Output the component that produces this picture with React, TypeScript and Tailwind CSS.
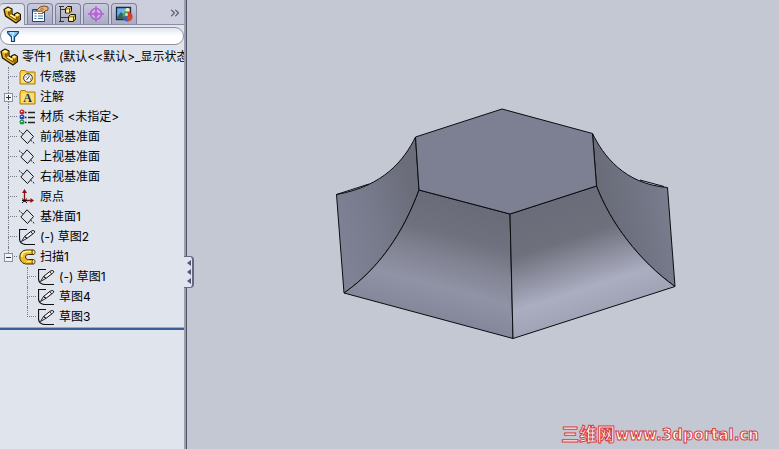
import { Fragment, ReactNode } from "react";
import { ChevronsRight } from "lucide-react";

const PartIcon = () => (
    <svg width="18" height="18" viewBox="0 0 18 18" className="shrink-0">
        <path d="M1 3.500 5 1l4 2v5l2.500 1.500V8L14.500 6.500 17.500 8.500v5l-4.500 3.500L2.500 10z" fill="#e3b11c" stroke="#1f1500" strokeWidth="1.200" strokeLinejoin="round" />
        <path d="M2.200 3.800 5 2l3 1.400L5.500 5.300zM12.300 8.500l2.300-1.100 2 1.400-2.500 1.700zM6 9.500l2.500-1 5 3-1 1.500z" fill="#fff0a0" />
        <path d="M5.600 6 8.300 4v4L6 9.200zM13.800 11.200l3-2.200v4.200l-3.300 2.500z" fill="#a06c06" />
        <path d="M5.500 5.500 6 9.500l7 4.500.5-3.200" fill="none" stroke="#4b3200" strokeWidth=".8" />
    </svg>
);

const PropertyIcon = () => (
    <svg width="18" height="18" viewBox="0 0 18 18">
        <path d="M1.500 4.500h12v12h-12z" fill="#fff" stroke="#27415f" />
        <path d="M2 5h5v2H2z" fill="#4d9be0" />
        <path d="M3.500 8.500h2M7 8.500h5M3.500 11h2M7 11h5M3.500 13.500h2M7 13.500h5" stroke="#3c76ac" />
        <path d="M5.500 5.500 9 2l4-1 4 1v3l-3 1-2 2-1.500-2L8 6.500z" fill="#e9b77e" stroke="#714216" strokeWidth=".9" />
        <path d="M9 4.500 12 3M10 6l3-2" stroke="#8b5524" strokeWidth=".7" />
    </svg>
);

const ConfigIcon = () => (
    <svg width="18" height="18" viewBox="0 0 18 18">
        <path d="M1.500 1v16M2 4.500h5M2 12.500h7" stroke="#333" fill="none" />
        <path d="M0 1.500h5M0 16.500h5" stroke="#333" />
        <path d="M6.500 3.500 8.500 1.500h4v4.500l-2 2h-4zM9.500 11.500l2-2h5V14l-2 2.500h-5z" fill="#f0d060" stroke="#1d1700" />
        <path d="M7 4h3.500v3.500M10.500 4l2-2M10 12h4.500v4M14.500 12l2-2" fill="none" stroke="#382b00" strokeWidth=".8" />
        <path d="M7.500 4.500h2.500v3H7.500zM10.500 12.500H14v3h-3.500z" fill="#fff3a8" />
    </svg>
);

const TargetIcon = () => (
    <svg width="18" height="18" viewBox="0 0 18 18" fill="none" stroke="#b95fd6" strokeWidth="1.500">
        <circle cx="9" cy="9" r="5.500" />
        <circle cx="9" cy="9" r="2" strokeWidth="1" />
        <path d="M9 1v16M1 9h16" />
    </svg>
);

const AppearanceIcon = () => (
    <svg width="18" height="18" viewBox="0 0 18 18">
        <path d="M1.500 2.500h14v12h-14z" fill="#69b1ed" stroke="#1a2c49" strokeWidth="1.300" />
        <path d="M2 12 6 7l7 7H2z" fill="#2f6a58" />
        <circle cx="12.500" cy="5" r="2" fill="#fff6a3" />
        <circle cx="12.500" cy="11.500" r="5" fill="#d83a28" />
        <path d="M12.500 11.500V6.500a5 5 0 0 0-4.900 5z" fill="#43ae50" />
        <path d="M12.500 11.500H7.600a5 5 0 0 0 4.900 5z" fill="#3263c7" />
        <path d="M12.500 11.500v5a5 5 0 0 0 4.900-5z" fill="#d04a30" />
        <circle cx="11.500" cy="9.500" r="1.500" fill="#fff" opacity=".7" />
    </svg>
);

const FunnelIcon = () => (
    <svg width="12" height="13" viewBox="0 0 12 13" className="shrink-0">
        <path d="M.7 1.500h10.600v1.600L7.500 7v4.500h-3V7L.7 3.100z" fill="#7cc7f2" stroke="#123f80" strokeWidth="1.200" />
        <path d="M3 3h4L5.500 5.500v5" fill="none" stroke="#e6f8ff" />
    </svg>
);

const Folder = ({ children }: { children: ReactNode }) => (
    <svg width="17" height="16" viewBox="0 0 17 16">
        <path d="M1 3.500 2 1.500h4.500l1 1.500H16v12H1z" fill="#f7cf42" stroke="#b07d0c" />
        <path d="M2 4.500h13v9.500H2z" fill="#fbdf70" />
        {children}
    </svg>
);

const SensorIcon = () => (
    <Folder>
        <circle cx="9" cy="9" r="4.300" fill="#fff" stroke="#333" />
        <path d="M7.500 11 11 6.500M6.500 8h1M9 5.500v1M11 10h1" stroke="#333" />
    </Folder>
);

const NoteIcon = () => (
    <Folder>
        <text x="8.500" y="13" textAnchor="middle" fontFamily="Liberation Serif, serif" fontSize="12" fontWeight="700" fill="#1c2d57">A</text>
    </Folder>
);

const MaterialIcon = () => (
    <svg width="17" height="16" viewBox="0 0 17 16">
        <circle cx="3" cy="3" r="2.500" fill="#c92a2a" />
        <circle cx="3" cy="8" r="2.500" fill="#2547c0" />
        <circle cx="3" cy="13" r="2.500" fill="#1f9a40" />
        <path d="M2 2h1.500v1H2zM2 7h1.500v1H2zM2 12h1.500v1H2z" fill="#fff" />
        <path d="M6 3.500h1.500M9 3.500h7M6 8.500h1.500M9 8.500h7M6 13.500h1.500M9 13.500h7" stroke="#222" strokeWidth="1.600" />
    </svg>
);

const PlaneIcon = () => (
    <svg width="17" height="16" viewBox="0 0 17 16" fill="none" stroke="#111">
        <path d="M8 .8 14.500 7.500 8.500 14.500 1.800 8z" />
        <path d="M0 1.500 4.500 5.500M11.500 11l4.500 4" strokeDasharray="2 1" />
    </svg>
);

const OriginIcon = () => (
    <svg width="17" height="16" viewBox="0 0 17 16" fill="none" stroke="#8c1212">
        <path d="M5.500 13V2M7 11.500h6" strokeWidth="1.300" />
        <path d="M5.500 0 8 4H3zM15 11.500 11.500 9v5z" fill="#8c1212" stroke="none" />
        <path d="M3 9.500l5 4.500M3 14l5-4.500M3 11.500h5" stroke="#111" />
    </svg>
);

const SketchIcon = () => (
    <svg width="17" height="16" viewBox="0 0 17 16" fill="none" stroke="#111">
        <path d="M8 .5H.5V10Q1 15 6.500 15.500H16" strokeWidth="1.200" />
        <path d="M5.500 7.500 12 2.300Q14.500.8 15.500 2t-1.200 2.500L8 9.300z" fill="#f2f3f7" />
        <path d="M2.500 12.500 5.500 7.500 8 9.300zM12 3l1.800 2" strokeWidth=".9" />
    </svg>
);

const SweepIcon = () => (
    <svg width="17" height="16" viewBox="0 0 17 16">
        <path d="M14.500 1H8C3.500 1 .8 4 .8 8s2.700 7 7.200 7h6.500v-4.500H9.500C7.500 10.500 6.500 9.500 6.500 8S7.500 5.500 9.500 5.500h5z" fill="#edbb24" stroke="#3b2900" />
        <path d="M12 2.500H8C4.500 2.500 2.700 5 2.700 8" fill="none" stroke="#fff1a0" strokeWidth="1.500" />
        <path d="M8 12.500h5" stroke="#fff1a0" />
        <ellipse cx="14.500" cy="3.300" rx="1.500" ry="2.200" fill="#ffe36a" stroke="#3b2900" strokeWidth=".8" />
        <ellipse cx="14.500" cy="12.700" rx="1.500" ry="2.200" fill="#ffe36a" stroke="#3b2900" strokeWidth=".8" />
    </svg>
);

const tabs = [
    { name: "FeatureManager", icon: <PartIcon /> },
    { name: "PropertyManager", icon: <PropertyIcon /> },
    { name: "ConfigurationManager", icon: <ConfigIcon /> },
    { name: "DimXpertManager", icon: <TargetIcon /> },
    { name: "DisplayManager", icon: <AppearanceIcon /> },
];

type Item = { label: string; icon: ReactNode; toggle?: "plus" | "minus"; children?: Item[] };

const items: Item[] = [
    { label: "传感器", icon: <SensorIcon /> },
    { label: "注解", icon: <NoteIcon />, toggle: "plus" },
    { label: "材质 <未指定>", icon: <MaterialIcon /> },
    { label: "前视基准面", icon: <PlaneIcon /> },
    { label: "上视基准面", icon: <PlaneIcon /> },
    { label: "右视基准面", icon: <PlaneIcon /> },
    { label: "原点", icon: <OriginIcon /> },
    { label: "基准面1", icon: <PlaneIcon /> },
    { label: "(-) 草图2", icon: <SketchIcon /> },
    {
        label: "扫描1",
        icon: <SweepIcon />,
        toggle: "minus",
        children: [
            { label: "(-) 草图1", icon: <SketchIcon /> },
            { label: "草图4", icon: <SketchIcon /> },
            { label: "草图3", icon: <SketchIcon /> },
        ],
    },
];

function Tree({ items }: { items: Item[] }) {
    return (
        <ul>
            {items.map((item, index) => (
                <Fragment key={item.label}>
                    <li className="relative flex h-5 items-center">
                        <span className="ml-2 flex w-[11px] shrink-0 flex-col">
                            <span className="h-[10px] w-[9px] border-b border-l border-dotted border-[#777b88]" />
                            <span className={index < items.length - 1 ? "h-[10px] border-l border-dotted border-[#777b88]" : "h-[10px]"} />
                        </span>
                        {item.toggle && (
                            <button
                                aria-label={item.label}
                                className="absolute left-1 flex size-[9px] items-center justify-center border border-[#8c909c] bg-[#f4f5f9]"
                            >
                                <svg width="5" height="5" viewBox="0 0 5 5" stroke="#333">
                                    <path d={item.toggle === "plus" ? "M0 2.500h5M2.500 0v5" : "M0 2.500h5"} />
                                </svg>
                            </button>
                        )}
                        {item.icon}
                        <span className="ml-1 whitespace-nowrap">{item.label}</span>
                    </li>
                    {item.children && (
                        <li className="pl-[19px]">
                            <Tree items={item.children} />
                        </li>
                    )}
                </Fragment>
            ))}
        </ul>
    );
}

function Model() {
    return (
        <svg viewBox="187 0 592 449" className="h-full w-full" role="img" aria-label="扫描1">
            <defs>
                <linearGradient id="left" gradientUnits="userSpaceOnUse" x1="338" y1="240" x2="419" y2="215">
                    <stop offset="0" stopColor="#7f8295" />
                    <stop offset=".5" stopColor="#777a8b" />
                    <stop offset="1" stopColor="#6b6d7b" />
                </linearGradient>
                <linearGradient id="right" gradientUnits="userSpaceOnUse" x1="595" y1="205" x2="672" y2="190">
                    <stop offset="0" stopColor="#686a76" />
                    <stop offset=".5" stopColor="#707382" />
                    <stop offset="1" stopColor="#7b7e8f" />
                </linearGradient>
                <linearGradient id="frontLeft" gradientUnits="userSpaceOnUse" x1="465" y1="202" x2="435" y2="316">
                    <stop offset="0" stopColor="#696b79" />
                    <stop offset=".3" stopColor="#6f717e" />
                    <stop offset=".52" stopColor="#828494" />
                    <stop offset=".75" stopColor="#9093a5" />
                    <stop offset="1" stopColor="#85889b" />
                </linearGradient>
                <linearGradient id="frontRight" gradientUnits="userSpaceOnUse" x1="553" y1="200" x2="590" y2="315">
                    <stop offset="0" stopColor="#6a6c79" />
                    <stop offset=".35" stopColor="#6e707c" />
                    <stop offset=".55" stopColor="#8b8d9d" />
                    <stop offset=".78" stopColor="#abaec1" />
                    <stop offset="1" stopColor="#a0a3b6" />
                </linearGradient>
            </defs>
            <g stroke="#0b0c10" strokeLinejoin="round">
                <path d="M415.500 137C404 160 384 186 336.500 194.500L344 293C380 268 404 231 419 190z" fill="url(#left)" />
                <path d="M592.500 133.500C603 155 624 184 667.500 187.500L675 286.500C639 261 610 222 596.500 186z" fill="url(#right)" />
                <path d="M419 190 510 214 513 338.500 344 293C380 268 404 231 419 190z" fill="url(#frontLeft)" />
                <path d="M510 214 596.500 186C610 222 639 261 675 286.500L513 338.500z" fill="url(#frontRight)" />
                <path d="M415.500 137 502 109 592.500 133.500 596.500 186 510 214 419 190z" fill="#7d7f92" />
                <path d="M336.500 194.500 369 184M640 180l24 6.500" fill="none" />
            </g>
        </svg>
    );
}

export default function App() {
    return (
        <div className="flex h-screen overflow-hidden bg-[#c4c8d3] font-['Inter','Noto_Sans_CJK_SC',sans-serif] text-xs text-black">
            <aside className="relative z-10 flex w-[187px] shrink-0 flex-col border-r border-[#4e5167] bg-[#e0e4ed]">
                <div className="flex min-h-0 flex-1 flex-col overflow-hidden border-r-2 border-[#9c9fae]">
                    <div className="flex h-[25px] items-end border-b border-[#8a8da4] bg-[#cccede]">
                        <div role="tablist" className="flex gap-0.5">
                            {tabs.map((tab, index) => (
                                <button
                                    key={tab.name}
                                    role="tab"
                                    aria-label={tab.name}
                                    aria-selected={index === 0}
                                    className={
                                        index === 0
                                            ? "-mb-px flex h-[22px] w-[25px] items-center justify-center rounded-t border-t border-r border-[#8a8da4] bg-[#e0e4ed]"
                                            : "flex h-[21px] w-[26px] items-center justify-center rounded-t border border-b-0 border-[#7d8098] bg-linear-to-b from-[#c9cadc] to-[#a9abc5]"
                                    }
                                >
                                    {tab.icon}
                                </button>
                            ))}
                        </div>
                        <button aria-label="更多" className="mr-0.5 mb-1 ml-auto text-[#555a6e]">
                            <ChevronsRight size={14} />
                        </button>
                    </div>
                    <label className="mt-0.5 flex h-[18px] items-center rounded-full border border-[#8f929e] bg-linear-to-b from-[#e3e5f0] to-white to-50% pl-1.5">
                        <FunnelIcon />
                        <input aria-label="过滤器" className="ml-1 h-4 min-w-0 flex-1 bg-transparent outline-none" />
                    </label>
                    <div className="mt-0.5 flex h-5 shrink-0 items-center whitespace-nowrap">
                        <PartIcon />
                        <span className="ml-1">零件1</span>
                        <span className="ml-2">(默认&lt;&lt;默认&gt;_显示状态</span>
                    </div>
                    <Tree items={items} />
                    <div className="h-[3px] shrink-0 border-t border-[#7fb0e8] bg-[#3a5f98]" />
                </div>
                <button
                    aria-label="折叠"
                    className="absolute top-[256px] -right-2 flex h-8 w-[10px] flex-col items-end justify-around rounded-r border border-l-0 border-r-2 border-[#666a80] bg-[#e0e4ed] py-0.5"
                >
                    {[0, 1, 2].map((n) => (
                        <svg key={n} width="5" height="6" viewBox="0 0 5 6">
                            <path d="M4 0v6L0 3z" fill="#50557c" />
                        </svg>
                    ))}
                </button>
            </aside>
            <main className="relative min-w-0 flex-1">
                <Model />
                <a
                    href="#"
                    className="absolute right-5 bottom-1 flex items-center font-['DejaVu_Sans','Noto_Sans_CJK_SC',sans-serif] text-[15px] leading-5 font-bold whitespace-nowrap text-white [-webkit-text-stroke:1px_#d83c3c]"
                >
                    <span className="text-lg leading-5">三维网</span>
                    www.3dportal.cn
                </a>
            </main>
        </div>
    );
}
